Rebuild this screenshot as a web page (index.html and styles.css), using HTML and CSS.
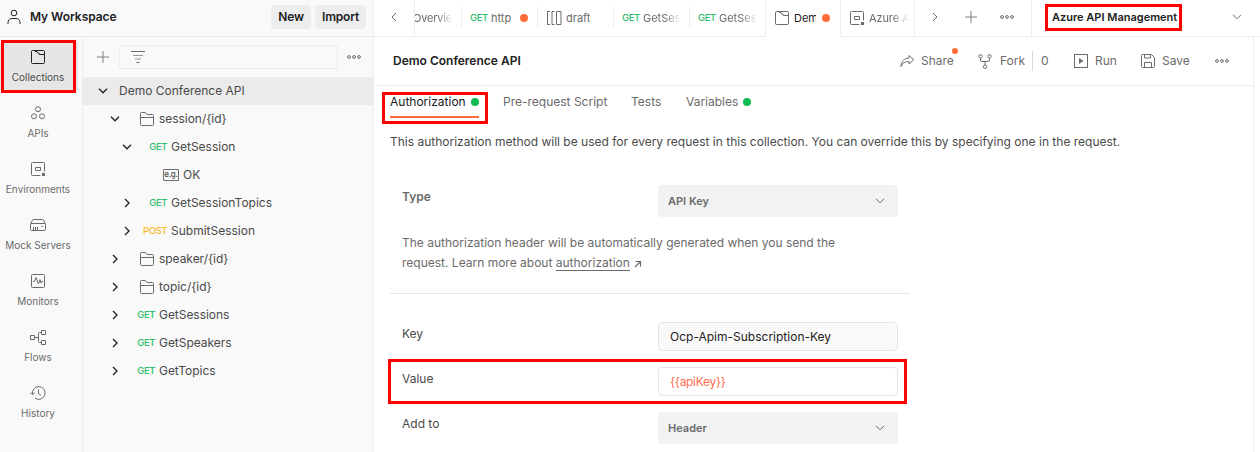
FILE: index.html
```
<!DOCTYPE html>
<html lang="en">
<head>
<meta charset="utf-8">
<title>My Workspace</title>
<link rel="stylesheet" href="styles.css">
</head>
<body>
<svg class="defs" width="0" height="0">
  <symbol id="collection" viewBox="0 0 14 14"><path d="M1.5.5h11a1 1 0 0 1 1 1v11a1 1 0 0 1-1 1h-11a1 1 0 0 1-1-1v-11a1 1 0 0 1 1-1zM4.500.5L8.700 4.500H13.500M4 1.500h1.500L9 4.500"/></symbol>
  <symbol id="folder" viewBox="0 0 14 14"><path d="M.5 12.500v-11a1 1 0 0 1 1-1h3.800L7 2.500h5.500a1 1 0 0 1 1 1v9a1 1 0 0 1-1 1h-11a1 1 0 0 1-1-1zM.5 5.500h13"/></symbol>
  <symbol id="env" viewBox="0 0 14 14"><path d="M9.500 13.500h-8a1 1 0 0 1-1-1v-11a1 1 0 0 1 1-1h11a1 1 0 0 1 1 1v8M4.500 5.500h5v3h-5z"/><path class="solid" d="M11 11h3v3h-3z"/></symbol>
  <symbol id="down" viewBox="0 0 10 6"><path d="M1 .8l4 4 4-4"/></symbol>
  <symbol id="right" viewBox="0 0 6 10"><path d="M1 1l4 4-4 4"/></symbol>
  <symbol id="plus" viewBox="0 0 12 12"><path d="M6 0v12M0 6h12"/></symbol>
  <symbol id="dots" viewBox="0 0 14 4"><circle cx="2" cy="2" r="1.400"/><circle cx="7" cy="2" r="1.400"/><circle cx="12" cy="2" r="1.400"/></symbol>
</svg>
<div class="app">
  <aside class="side">
    <header class="workspace">
      <svg class="ico user" width="14" height="16"><circle cx="7" cy="4" r="2.800"/><path d="M1 15v-1.500c0-2.600 2-4 4-4h4c2 0 4 1.400 4 4V15"/></svg>
      <span class="ws-name">My Workspace</span>
      <button class="btn new">New</button><button class="btn import">Import</button>
    </header>
    <div class="side-body">
      <nav class="rail">
        <div class="rail-item on"><svg class="ico" width="14" height="14"><use href="#collection"/></svg><span>Collections</span></div>
        <div class="rail-item"><svg class="ico" width="14" height="14"><circle cx="7" cy="3.200" r="2.500"/><circle cx="3" cy="10.300" r="2.500"/><circle cx="11" cy="10.300" r="2.500"/></svg><span>APIs</span></div>
        <div class="rail-item"><svg class="ico" width="14" height="14"><use href="#env"/></svg><span>Environments</span></div>
        <div class="rail-item"><svg class="ico" width="16" height="14"><path d="M.5 6.500L2.500 2q.3-.5 1-.5h9q.7 0 1 .5l2 4.500M1.500 5.500h13a1 1 0 0 1 1 1v5a1 1 0 0 1-1 1h-13a1 1 0 0 1-1-1v-5a1 1 0 0 1 1-1zM3.500 9v3M5.500 9v3M7.500 9v3M11.500 8.500h1.500"/></svg><span>Mock Servers</span></div>
        <div class="rail-item"><svg class="ico" width="14" height="14"><rect x=".5" y=".5" width="13" height="13" rx="1"/><path d="M2 7.500h1.500L5 3.500l2.500 6.500L9 5.500l1 3.500.8-1.500H12"/></svg><span>Monitors</span></div>
        <div class="rail-item flows"><svg class="ico" width="16" height="16"><path d="M.5 5.500h4v4h-4zM11.500.5h4v4h-4zM11.500 10.500h4v4h-4zM4.500 7.500h4M11.500 2.500h-2q-1 0-1 1v8q0 1 1 1h2"/></svg><span>Flows</span></div>
        <div class="rail-item"><svg class="ico" width="16" height="14"><path d="M2.500 8.500A6.400 6.400 0 1 1 5 12.200M.5 6.500l2 2.200 2.200-2.200M8.500 3.500v4.200l2.500 1.500"/></svg><span>History</span></div>
      </nav>
      <section class="tree">
        <div class="search-row">
          <svg class="ico light" width="12" height="12"><use href="#plus"/></svg>
          <div class="search"><svg class="ico" width="14" height="12"><path d="M0 .5h14"/><path d="M2 4.500h10M4 8h6" opacity=".7"/><path d="M5.500 11.500h3"/></svg></div>
          <svg class="ico" width="14" height="4"><use href="#dots"/></svg>
        </div>
        <div class="row l0 open"><svg class="chev d" width="10" height="6"><use href="#down"/></svg><span class="name">Demo Conference API</span></div>
        <div class="row l1"><svg class="chev d" width="10" height="6"><use href="#down"/></svg><svg class="ico fold" width="14" height="14"><use href="#folder"/></svg><span class="name">session/{id}</span></div>
        <div class="row l2"><svg class="chev d" width="10" height="6"><use href="#down"/></svg><b class="verb">GET</b><span class="name">GetSession</span></div>
        <div class="row l3"><i class="eg">e.g.</i><span class="name">OK</span></div>
        <div class="row l2"><svg class="chev" width="6" height="10"><use href="#right"/></svg><b class="verb">GET</b><span class="name">GetSessionTopics</span></div>
        <div class="row l2"><svg class="chev" width="6" height="10"><use href="#right"/></svg><b class="verb post">POST</b><span class="name">SubmitSession</span></div>
        <div class="row l1"><svg class="chev" width="6" height="10"><use href="#right"/></svg><svg class="ico fold" width="14" height="14"><use href="#folder"/></svg><span class="name">speaker/{id}</span></div>
        <div class="row l1"><svg class="chev" width="6" height="10"><use href="#right"/></svg><svg class="ico fold" width="14" height="14"><use href="#folder"/></svg><span class="name">topic/{id}</span></div>
        <div class="row l1"><svg class="chev" width="6" height="10"><use href="#right"/></svg><b class="verb">GET</b><span class="name">GetSessions</span></div>
        <div class="row l1"><svg class="chev" width="6" height="10"><use href="#right"/></svg><b class="verb">GET</b><span class="name">GetSpeakers</span></div>
        <div class="row l1"><svg class="chev" width="6" height="10"><use href="#right"/></svg><b class="verb">GET</b><span class="name">GetTopics</span></div>
      </section>
    </div>
  </aside>
  <main class="main">
    <div class="tabs">
      <div class="cell prev"><svg class="ico" width="6" height="10"><path d="M5 1L1 5l4 4"/></svg></div>
      <div class="cell tab over"><span class="fade">Overvie</span></div>
      <div class="cell tab http"><b class="verb">GET</b><span>http</span><i class="dot"></i></div>
      <div class="cell tab draft"><svg class="ico" width="15" height="14"><path d="M3 .5H.5v13H3M7.500.5H5v13h2.500M9.500.5h4.500v13H9.500z"/></svg><span>draft</span></div>
      <div class="cell tab ses"><b class="verb">GET</b><span class="fade">GetSes</span></div>
      <div class="cell tab ses last"><b class="verb">GET</b><span class="fade">GetSes</span></div>
      <div class="cell tab active"><svg class="ico" width="14" height="14"><use href="#collection"/></svg><span class="clip">Dem</span><i class="dot"></i></div>
      <div class="cell tab azure"><svg class="ico" width="14" height="14"><use href="#env"/></svg><span class="fade">Azure A</span></div>
      <div class="cell ctl"><svg class="ico" width="6" height="10"><use href="#right"/></svg><svg class="ico light add" width="12" height="12"><use href="#plus"/></svg><svg class="ico" width="14" height="4"><use href="#dots"/></svg></div>
      <div class="cell envsel"><span>Azure API Management</span><svg class="ico" width="10" height="6"><use href="#down"/></svg></div>
    </div>
    <div class="content">
      <div class="pane">
        <div class="titlebar">
          <h1>Demo Conference API</h1>
          <div class="act share"><svg class="ico" width="15" height="14"><path d="M9 1.500l4.800 4.200L9 10V7.500C5 7.500 2.500 9 1 12.500 1.200 7.500 4 4.500 9 4z"/></svg><span>Share</span><i class="badge"></i></div>
          <div class="act fork"><svg class="ico" width="14" height="15"><circle cx="2.500" cy="2.300" r="1.700"/><circle cx="11.500" cy="2.300" r="1.700"/><circle cx="7" cy="12.700" r="1.700"/><path d="M2.500 4v2q0 1.500 1.500 1.500h6q1.500 0 1.500-1.500V4M7 7.500V11"/></svg><span>Fork</span></div>
          <div class="act count">0</div>
          <div class="act run"><svg class="ico" width="14" height="14"><rect x=".5" y=".5" width="13" height="13"/><path class="solid" d="M5 4l4.500 3L5 10z"/></svg><span>Run</span></div>
          <div class="act save"><svg class="ico" width="14" height="14"><path d="M1.500.5h9l3 3v9a1 1 0 0 1-1 1h-11a1 1 0 0 1-1-1v-11a1 1 0 0 1 1-1zM3.500.5v3.500h6V.5M3.500 13.500V8.500h7v5"/></svg><span>Save</span></div>
          <svg class="ico" width="14" height="4"><use href="#dots"/></svg>
        </div>
        <div class="subtabs">
          <div class="st on"><span>Authorization</span><i class="dot green"></i></div>
          <div class="st pre">Pre-request Script</div>
          <div class="st tests">Tests</div>
          <div class="st vars"><span>Variables</span><i class="dot green"></i></div>
        </div>
        <p class="desc">This authorization method will be used for every request in this collection. You can override this by specifying one in the request.</p>
        <div class="auth">
          <div class="field type"><label>Type</label><div class="select"><span>API Key</span><svg class="ico" width="10" height="6"><use href="#down"/></svg></div></div>
          <p class="note">The authorization header will be automatically generated when you send the<br>request. Learn more about <a>authorization</a><svg class="ico ext" width="8" height="8"><path d="M1 7l5.500-5.500M1.500 1.500h5v5"/></svg></p>
        </div>
        <div class="auth rows">
          <div class="field"><label>Key</label><div class="input filled">Ocp-Apim-Subscription-Key</div></div>
          <div class="field"><label>Value</label><div class="input var">{{apiKey}}</div></div>
          <div class="field"><label>Add to</label><div class="select"><span>Header</span><svg class="ico" width="10" height="6"><use href="#down"/></svg></div></div>
        </div>
      </div>
    </div>
  </main>
  <div class="mark m-collections"></div>
  <div class="mark m-auth"></div>
  <div class="mark m-env"></div>
  <div class="mark m-value"></div>
</div>
</body>
</html>
```
FILE: styles.css
```
* { box-sizing: border-box; }
body { margin: 0; font: 12px/16px Inter, "Liberation Sans", sans-serif; color: #6b6b6b; background: #fff; }
p, h1 { margin: 0; }
i, b { font-style: normal; font-weight: 400; }
.defs { position: absolute; }
.app { position: relative; display: flex; width: 1260px; height: 452px; overflow: hidden; }
svg { flex: none; }
.ico { fill: none; stroke: #6b6b6b; stroke-width: 1; }
.ico.light { stroke: #808080; }
.solid { fill: #6b6b6b; stroke: none; }

/* sidebar */
.side { width: 374px; flex: none; display: flex; flex-direction: column; background: #f9f9f9; border-right: 1px solid #ededed; }
.workspace { height: 37px; flex: none; border-bottom: 1px solid #ededed; display: flex; align-items: center; padding: 0 7px 2px; }
.user { stroke: #212121; }
.ws-name { margin-left: 9px; margin-right: auto; color: #212121; font-weight: 600; letter-spacing: -.05px; }
.btn { height: 24px; border: 0; border-radius: 4px; background: #ededed; color: #212121; font: 600 12px/24px Inter, sans-serif; padding: 0; letter-spacing: -.2px; }
.new { width: 40px; margin-right: 4px; }
.import { width: 51px; }
.side-body { display: flex; flex: 1; }
.rail { width: 83px; border-right: 1px solid #ededed; padding: 4px 4px 0 0; }
.rail-item { display: flex; flex-direction: column; align-items: center; justify-content: space-between; height: 51px; margin-bottom: 5px; padding: 9px 2px 7px 0; width: 78px; font-size: 10px; line-height: 16px; border-radius: 4px; }
.rail-item.on { background: #e6e6e6; color: #4a4a4a; }
.rail-item.on .ico { stroke: #212121; }
.tree { flex: 1; }
.search-row { height: 40px; display: flex; align-items: center; padding: 0 12px 0 14px; justify-content: space-between; }
.search { width: 219px; height: 24px; border: 1px solid #ededed; border-radius: 2px; padding: 5px 11px; display: flex; margin-left: 1px; }
.row { height: 28px; display: flex; align-items: center; color: #4a4a4a; }
.row.open { background: #ebebeb; }
.name { letter-spacing: -.04px; }
.l0 .name, .l2 .name { letter-spacing: 0; }
.chev { fill: none; stroke: #212121; stroke-width: 1.300; margin-right: 2px; }
.chev.d { margin-right: 0; margin-left: -2px; }
.l0 { padding-left: 17px; }
.l0 .name { margin-left: 11px; }
.l1 { padding-left: 29px; }
.l2 { padding-left: 41px; }
.l3 { padding-left: 80px; }
.fold { margin-left: 20px; margin-right: 5px; }
.verb { font-size: 9.500px; font-weight: 500; color: #2dbe6c; letter-spacing: -.45px; width: 35px; text-align: right; margin-right: 4px; white-space: nowrap; }
.verb.post { color: #fbb92c; }
.eg { width: 16px; height: 12px; border: 1px solid #6b6b6b; border-radius: 1px; font: 500 8px/8px Inter, sans-serif; text-align: center; margin-right: 4px; letter-spacing: -.3px; }

/* tab strip */
.main { flex: 1; min-width: 0; display: flex; flex-direction: column; }
.tabs { height: 37px; flex: none; display: flex; }
.cell { border-bottom: 1px solid #ededed; display: flex; align-items: center; flex: none; position: relative; }
.prev { width: 41px; border-right: 1px solid #ededed; padding: 0 0 2px 17px; }
.tab { font-size: 11px; }
.tab::after { content: ""; position: absolute; right: 0; top: 6px; width: 1px; height: 21px; background: #ededed; }
.last::after, .active::after, .azure::after { top: 0; height: 36px; }
.tab .verb { width: 17px; text-align: left; }
.tab > span { overflow: hidden; white-space: nowrap; }
.fade { -webkit-mask-image: linear-gradient(90deg, #000 60%, transparent); mask-image: linear-gradient(90deg, #000 60%, transparent); }
.over { width: 47px; }
.over .fade { width: 38px; text-indent: -2px; letter-spacing: -.2px; }
.http { width: 76px; padding-left: 8px; }
.http .dot { margin-left: auto; margin-right: 10px; }
.dot { width: 8px; height: 8px; border-radius: 50%; background: #ff6c37; margin-left: 6px; flex: none; }
.dot.green { background: #0cbb52; margin-left: 5px; }
.draft { width: 76px; padding-left: 9px; }
.draft span { margin-left: 4px; }
.ses { width: 76px; padding-left: 8px; }
.ses .fade { width: 38px; }
.active { width: 75px; padding-left: 9px; border-bottom-color: transparent; color: #212121; }
.clip { width: 22px; margin-left: 5px; }
.azure { width: 74px; padding-left: 9px; }
.azure .fade { width: 40px; margin-left: 5px; letter-spacing: -.1px; }
.ctl { width: 117px; padding: 0 17px 2px; justify-content: space-between; border-right: 1px solid #ededed; }
.add { margin-left: 3px; }
.envsel { flex: 1; padding: 0 18px 2px 20px; justify-content: space-between; color: #212121; font-weight: 600; font-size: 11px; }

/* request pane */
.content { flex: 1; display: flex; padding-right: 6px; }
.pane { flex: 1; border-right: 1px solid #ededed; }
.titlebar { height: 49px; display: flex; align-items: center; border-bottom: 1px solid #ededed; padding: 0 24px 0 19px; }
h1 { font-size: 12px; line-height: 16px; font-weight: 600; color: #212121; margin-right: auto; }
.act { display: flex; align-items: center; gap: 7px; position: relative; }
.share { width: 78px; gap: 6px; }
.badge { position: absolute; left: 52px; top: -5px; width: 6px; height: 6px; border-radius: 50%; background: #ff6c37; }
.fork { width: 54px; gap: 8px; }
.count { width: 42px; height: 20px; border-left: 1px solid #d9d9d9; padding-left: 8px; }
.run { width: 67px; }
.save { width: 74px; }
.subtabs { display: flex; height: 32px; padding: 8px 0 0 16px; }
.st { height: 24px; display: flex; }
.st .dot { margin-top: 4px; }
.st.on { width: 89px; color: #212121; border-bottom: 2px solid #ff6c37; margin-right: 24px; }
.pre { width: 128px; }
.tests { width: 55px; }
.desc { margin: 16px 0 0 16px; color: #4a4a4a; white-space: nowrap; }
.auth { margin-left: 16px; width: 520px; padding-left: 12px; height: 144px; border-bottom: 1px solid #e6e6e6; padding-top: 35px; }
.field { display: flex; height: 45px; }
.field label { width: 256px; color: #4a4a4a; padding-top: 4px; }
.type label { font-weight: 600; color: #6b6b6b; }
.select { width: 240px; height: 32px; border-radius: 4px; background: #f2f2f2; display: flex; align-items: center; justify-content: space-between; padding: 0 13px 0 10px; font-weight: 600; font-size: 11px; }
.input { width: 240px; height: 29px; border: 1px solid #e6e6e6; border-radius: 4px; padding: 6px 11px; color: #212121; }
.filled { background: #f9f9f9; }
.var { color: #ff6c4f; letter-spacing: -.3px; }
.note { line-height: 20px; white-space: nowrap; margin-top: 3px; }
.note a { border-bottom: 1px solid #6b6b6b; }
.ext { margin-left: 4px; stroke-width: 1.200; vertical-align: -1px; }
.rows { border: 0; padding-top: 28px; height: auto; }

/* callout frames */
.mark { position: absolute; border: 3px solid #f00; }
.m-collections { left: 1px; top: 40px; width: 75px; height: 53px; }
.m-auth { left: 382px; top: 92px; width: 106px; height: 32px; }
.m-env { left: 1045px; top: 4px; width: 137px; height: 27px; }
.m-value { left: 388px; top: 359px; width: 519px; height: 45px; }
```
